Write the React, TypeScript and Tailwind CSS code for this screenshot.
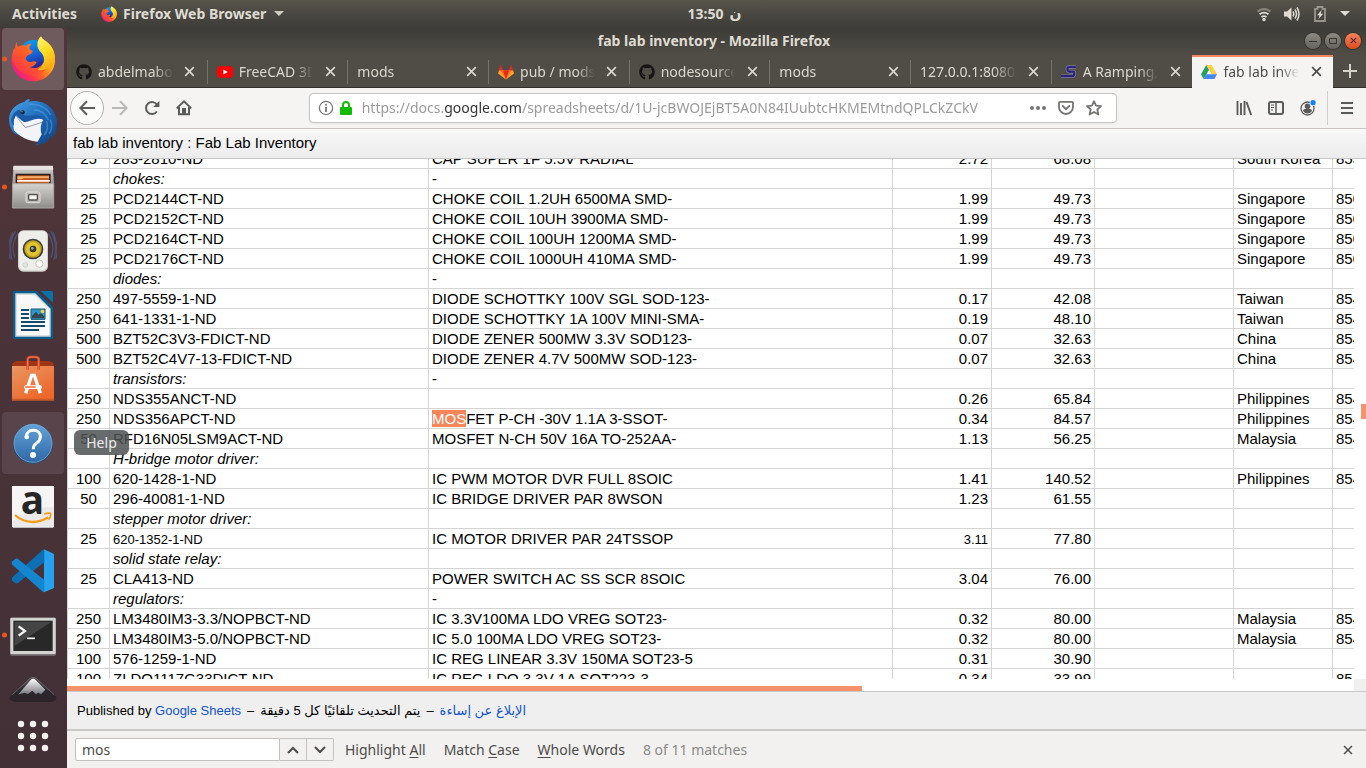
import type { ReactNode } from 'react';
import { FaGithub } from 'react-icons/fa';

type Row = {
  qty?: string;
  part: string;
  desc?: string;
  unit?: string;
  total?: string;
  origin?: string;
  code?: string;
  heading?: boolean;
  small?: boolean;
  match?: string;
};

const rows: Row[] = [
  { qty: '25', part: '283-2810-ND', desc: 'CAP SUPER 1F 5.5V RADIAL', unit: '2.72', total: '68.08', origin: 'South Korea', code: '853224' },
  { part: 'chokes:', desc: '-', heading: true },
  { qty: '25', part: 'PCD2144CT-ND', desc: 'CHOKE COIL 1.2UH 6500MA SMD-', unit: '1.99', total: '49.73', origin: 'Singapore', code: '850450' },
  { qty: '25', part: 'PCD2152CT-ND', desc: 'CHOKE COIL 10UH 3900MA SMD-', unit: '1.99', total: '49.73', origin: 'Singapore', code: '850450' },
  { qty: '25', part: 'PCD2164CT-ND', desc: 'CHOKE COIL 100UH 1200MA SMD-', unit: '1.99', total: '49.73', origin: 'Singapore', code: '850450' },
  { qty: '25', part: 'PCD2176CT-ND', desc: 'CHOKE COIL 1000UH 410MA SMD-', unit: '1.99', total: '49.73', origin: 'Singapore', code: '850450' },
  { part: 'diodes:', desc: '-', heading: true },
  { qty: '250', part: '497-5559-1-ND', desc: 'DIODE SCHOTTKY 100V SGL SOD-123-', unit: '0.17', total: '42.08', origin: 'Taiwan', code: '854110' },
  { qty: '250', part: '641-1331-1-ND', desc: 'DIODE SCHOTTKY 1A 100V MINI-SMA-', unit: '0.19', total: '48.10', origin: 'Taiwan', code: '854110' },
  { qty: '500', part: 'BZT52C3V3-FDICT-ND', desc: 'DIODE ZENER 500MW 3.3V SOD123-', unit: '0.07', total: '32.63', origin: 'China', code: '854110' },
  { qty: '500', part: 'BZT52C4V7-13-FDICT-ND', desc: 'DIODE ZENER 4.7V 500MW SOD-123-', unit: '0.07', total: '32.63', origin: 'China', code: '854110' },
  { part: 'transistors:', desc: '-', heading: true },
  { qty: '250', part: 'NDS355ANCT-ND', unit: '0.26', total: '65.84', origin: 'Philippines', code: '854129' },
  { qty: '250', part: 'NDS356APCT-ND', match: 'MOS', desc: 'FET P-CH -30V 1.1A 3-SSOT-', unit: '0.34', total: '84.57', origin: 'Philippines', code: '854129' },
  { qty: '50', part: 'RFD16N05LSM9ACT-ND', desc: 'MOSFET N-CH 50V 16A TO-252AA-', unit: '1.13', total: '56.25', origin: 'Malaysia', code: '854129' },
  { part: 'H-bridge motor driver:', heading: true },
  { qty: '100', part: '620-1428-1-ND', desc: 'IC PWM MOTOR DVR FULL 8SOIC', unit: '1.41', total: '140.52', origin: 'Philippines', code: '854239' },
  { qty: '50', part: '296-40081-1-ND', desc: 'IC BRIDGE DRIVER PAR 8WSON', unit: '1.23', total: '61.55' },
  { part: 'stepper motor driver:', heading: true },
  { qty: '25', part: '620-1352-1-ND', desc: 'IC MOTOR DRIVER PAR 24TSSOP', unit: '3.11', total: '77.80', small: true },
  { part: 'solid state relay:', heading: true },
  { qty: '25', part: 'CLA413-ND', desc: 'POWER SWITCH AC SS SCR 8SOIC', unit: '3.04', total: '76.00' },
  { part: 'regulators:', desc: '-', heading: true },
  { qty: '250', part: 'LM3480IM3-3.3/NOPBCT-ND', desc: 'IC 3.3V100MA LDO VREG SOT23-', unit: '0.32', total: '80.00', origin: 'Malaysia', code: '854239' },
  { qty: '250', part: 'LM3480IM3-5.0/NOPBCT-ND', desc: 'IC 5.0 100MA LDO VREG SOT23-', unit: '0.32', total: '80.00', origin: 'Malaysia', code: '854239' },
  { qty: '100', part: '576-1259-1-ND', desc: 'IC REG LINEAR 3.3V 150MA SOT23-5', unit: '0.31', total: '30.90' },
  { qty: '100', part: 'ZLDO1117G33DICT-ND', desc: 'IC REG LDO 3.3V 1A SOT223-3', unit: '0.34', total: '33.99', code: '85' },
];

function FirefoxLogo({ className, id }: { className: string; id: string }) {
  return (
    <svg className={className} viewBox="0 0 132 136" aria-hidden="true">
      <defs>
        <linearGradient id={id + 'body'} x1="0.9" y1="0.2" x2="0.15" y2="0.85">
          <stop offset="0" stopColor="#ffe226" />
          <stop offset="0.3" stopColor="#ffa81c" />
          <stop offset="0.55" stopColor="#ff6a22" />
          <stop offset="0.8" stopColor="#ff3350" />
          <stop offset="1" stopColor="#e8208a" />
        </linearGradient>
        <linearGradient id={id + 'globe'} x1="0.3" y1="0" x2="0.6" y2="1">
          <stop offset="0" stopColor="#0a9df0" />
          <stop offset="0.5" stopColor="#1565d8" />
          <stop offset="1" stopColor="#21208c" />
        </linearGradient>
        <linearGradient id={id + 'head'} x1="0.8" y1="0" x2="0" y2="0.9">
          <stop offset="0" stopColor="#ff8c1a" />
          <stop offset="0.5" stopColor="#ff5a2a" />
          <stop offset="1" stopColor="#fb2f55" />
        </linearGradient>
        <linearGradient id={id + 'flame'} x1="0.2" y1="0" x2="0.6" y2="1">
          <stop offset="0" stopColor="#fff36a" />
          <stop offset="0.5" stopColor="#ffdb22" />
          <stop offset="1" stopColor="#ffa514" />
        </linearGradient>
      </defs>
      <path d="M4 52C0 66 0 80 5 93c9 26 33 42 61 42 38 0 66-29 66-64 0-13-3-24-9-34L60 20Z" fill={`url(#${id}body)`} />
      <circle cx="68" cy="54" r="43" fill={`url(#${id}globe)`} />
      <path d="M17 16c0 7 2 11 5 15 7-4 14-5 22-3 6-5 11-6 18-6-5 5-7 9-7 15 3 4 6 5 11 6-2 7-7 10-13 12-5 3-7 6-9 11 1 8 8 12 15 11 8-2 12-5 18 1-3 8-11 13-21 14 16 8 34 0 40-12l16 5c-8 20-26 32-46 32C30 117 4 88 4 56c1-10 4-17 9-23 0-6 1-11 4-17Z" fill={`url(#${id}head)`} />
      <path d="M90 0c-10 9-13 23-9 35 4 11 14 15 17 27 4 18-6 32-19 38 25 6 53-9 53-31 0-20-6-36-20-49C103 13 94 9 90 0Z" fill={`url(#${id}flame)`} />
    </svg>
  );
}

function Thunderbird() {
  return (
    <svg className="size-12" viewBox="0 0 144 144" aria-hidden="true">
      <defs>
        <linearGradient id="tbBlue" x1="0" y1="0" x2="1" y2="1">
          <stop offset="0" stopColor="#4aa8ee" />
          <stop offset="0.5" stopColor="#1c69b8" />
          <stop offset="1" stopColor="#123f7f" />
        </linearGradient>
      </defs>
      <path d="M47 8C53 0 60 0 64 2L58 8c44-9 86 19 86 66 0 16-6 31-16 43l-3-6c-6 12-14 20-26 25l3-8c-6 6-14 10-22 11l8-12-30-8L18 104C4 92-2 72 1 52 5 31 22 15 47 8Z" fill="url(#tbBlue)" />
      <path d="M20 50 40 66l46-12 17 8c-8 12-10 30-5 44l-12 22C58 126 32 114 15 94c-3-14-2-30 5-44Z" fill="#f3f4f7" />
      <path d="M21 50c8 10 17 23 28 36l50-16" fill="none" stroke="#9a9da6" strokeWidth="3" />
      <path d="M7 60c3-15 12-24 24-28l16 18c14 2 30-6 42 0 12 4 16 8 16 12-16-6-30-2-44 4-8 4-14 4-18 2L22 48c-8 8-9 18-7 32-6-6-9-12-8-20Z" fill="#1b5aa6" />
      <path d="M62 16c28-2 52 10 63 32M75 32c22 2 36 14 43 31M112 66c6 12 4 28-6 42M124 62c7 16 5 30-4 42" fill="none" stroke="#61aee9" strokeWidth="5" opacity="0.45" />
      <circle cx="41" cy="40" r="6" fill="#182139" />
      <circle cx="39" cy="38" r="2" fill="#dba447" />
    </svg>
  );
}

function Files() {
  return (
    <svg className="size-12" viewBox="0 0 144 144" aria-hidden="true">
      <defs>
        <linearGradient id="cab" x1="0" y1="0" x2="0" y2="1">
          <stop offset="0" stopColor="#d4d3d0" />
          <stop offset="1" stopColor="#8f8d89" />
        </linearGradient>
      </defs>
      <path d="M14 9h117l5 64H9Z" fill="url(#cab)" />
      <path d="M14 8h117l2 12H12Z" fill="#e7e5e1" />
      <path d="M20 32h105v30H20Z" fill="#29201d" />
      <path d="M25 37h95v25H25Z" fill="#c75a1d" />
      <path d="M25 40h95v5H44l-5 4H25Z" fill="#f4b16f" />
      <path d="M24 51h99v5H24Z" fill="#fffaf0" />
      <path d="M11 62h123v73H11Z" fill="url(#cab)" stroke="#aaa7a2" strokeWidth="3" />
      <rect x="51" y="87" width="42" height="32" rx="5" fill="#bbb9b4" stroke="#e2dfda" strokeWidth="3" />
      <rect x="59" y="95" width="26" height="16" rx="2" fill="#f5f5f1" stroke="#52504e" strokeWidth="4" />
    </svg>
  );
}

function Speaker() {
  return (
    <svg className="size-12" viewBox="0 0 144 144" aria-hidden="true">
      <g fill="none" stroke="#516294" strokeWidth="4" opacity="0.6">
        <path d="M26 20C10 44 10 72 18 92M19 13C0 42 2 77 10 98M12 16C-4 47-3 77 4 96" />
        <path d="M118 20c16 26 16 52 8 72M125 13c19 29 17 64 9 85M132 16c14 31 14 61 8 80" />
      </g>
      <rect x="27" y="10" width="90" height="124" rx="16" fill="#cfcfcc" />
      <rect x="30" y="12" width="84" height="118" rx="14" fill="#ededea" />
      <circle cx="72" cy="66" r="31" fill="#393c3d" />
      <circle cx="72" cy="66" r="26" fill="#c3a41b" />
      <circle cx="72" cy="66" r="21" fill="#e1c52f" />
      <circle cx="72" cy="66" r="10" fill="#343839" />
      <circle cx="70" cy="64" r="4" fill="#a4aaad" />
      <circle cx="91" cy="110" r="11" fill="#fff" stroke="#c5c5c2" strokeWidth="3" />
      <circle cx="49" cy="114" r="7" fill="#e2e2df" stroke="#cacac7" strokeWidth="2" />
    </svg>
  );
}

function Writer() {
  return (
    <svg className="size-12" viewBox="0 0 144 144" aria-hidden="true">
      <path d="M16 0h66l50 48v91a5 5 0 0 1-5 5H17a5 5 0 0 1-5-5V4a4 4 0 0 1 4-4Z" fill="#075e91" />
      <path d="M95 0h32a5 5 0 0 1 5 5v30Z" fill="#0873ab" />
      <path d="M21 9h57l45 45v81H21Z" fill="#f7f8f7" stroke="#d1d5d5" strokeWidth="4" />
      <path d="M36 57h24M36 69h24M36 81h24M36 93h72M36 105h72M36 117h54" stroke="#124b6c" strokeWidth="6" />
      <rect x="66" y="54" width="42" height="31" fill="#2e96ca" />
      <path d="M69 82V75l12-13 8 9 7-5 9 10v6Z" fill="#34474e" />
      <circle cx="101" cy="61" r="6" fill="#f5cf45" />
      <path d="M66 54h42v31H66Z" fill="none" stroke="#12587e" strokeWidth="3" />
    </svg>
  );
}

function Software() {
  return (
    <svg className="size-12" viewBox="0 0 144 144" aria-hidden="true">
      <defs>
        <linearGradient id="bag" x1="0" y1="0" x2="0.6" y2="1">
          <stop offset="0" stopColor="#e99762" />
          <stop offset="1" stopColor="#ee672b" />
        </linearGradient>
      </defs>
      <path d="M10 25 22 18h100l12 7v12H10Z" fill="#9f3417" />
      <path d="M9 33h126v102H9Z" fill="url(#bag)" />
      <path d="M56 44V14q0-8 9-8h15q9 0 9 8v30" fill="none" stroke="#d34b27" strokeWidth="8" />
      <path d="M56 44V14q0-8 9-8h15q9 0 9 8v30" fill="none" stroke="#f07650" strokeWidth="3" />
      <path d="M50 115 68 61h8l18 54" fill="none" stroke="#fff" strokeWidth="10" />
      <rect x="45" y="91" width="54" height="11" rx="5" fill="#fff" />
      <path d="M50 96h28" stroke="#ed6b33" strokeWidth="5" strokeLinecap="round" />
      <path d="M9 131h126v6H9Z" fill="#c75a2b" />
    </svg>
  );
}

function HelpIcon() {
  return (
    <svg className="size-12" viewBox="0 0 144 144" aria-hidden="true">
      <defs>
        <linearGradient id="hlp" x1="0" y1="0" x2="0" y2="1">
          <stop offset="0" stopColor="#62a3d8" />
          <stop offset="1" stopColor="#2f68a7" />
        </linearGradient>
      </defs>
      <circle cx="72" cy="75" r="59" fill="#274d75" />
      <circle cx="72" cy="73" r="57" fill="url(#hlp)" stroke="#7db5df" strokeWidth="2" />
      <path d="M52 54c0-12 8-20 21-20s21 8 21 19c0 9-5 15-12 20-7 5-9 8-9 18" fill="none" stroke="#fff" strokeWidth="9" />
      <circle cx="53" cy="54" r="7" fill="#fff" />
      <circle cx="72" cy="108" r="9" fill="#fff" />
    </svg>
  );
}

function Amazon() {
  return (
    <svg className="size-12" viewBox="0 0 144 144" aria-hidden="true">
      <rect x="9" y="9" width="126" height="125" rx="4" fill="#eaeaea" />
      <path d="M9 9h126v64Q62 67 9 118Z" fill="#f5f5f5" />
      <text x="70" y="94" textAnchor="middle" fontFamily="Open Sans, sans-serif" fontSize="116" fontWeight="700" fill="#252525">a</text>
      <path d="M18 96c29 26 69 27 100 7" fill="none" stroke="#f59b18" strokeWidth="7" />
      <path d="M105 93c8-3 15-3 20-2 1 6-1 13-6 19" fill="none" stroke="#f59b18" strokeWidth="5" />
    </svg>
  );
}

function VsCode() {
  return (
    <svg className="size-12" viewBox="0 0 144 144" aria-hidden="true">
      <path d="M105 7 135 21v102l-30 13Z" fill="#27a2f0" />
      <path d="M10 91 102 8l4-1v38L26 109q-3 2-6 0L10 101q-5-5 0-10Z" fill="#0d70b5" />
      <path d="M10 53q-5-5 0-10l10-8q3-2 6 0l80 64v37l-4-1Z" fill="#1485cf" />
    </svg>
  );
}

function Terminal() {
  return (
    <svg className="size-12" viewBox="0 0 144 144" aria-hidden="true">
      <rect x="3" y="20" width="138" height="114" rx="5" fill="#777" />
      <rect x="4" y="20" width="136" height="109" rx="4" fill="#d3d3d1" />
      <rect x="13" y="29" width="118" height="91" fill="#282828" />
      <path d="M17 33h110L17 104Z" fill="#444" />
      <path d="m29 46 19 14-19 14" fill="none" stroke="#f4f4f2" strokeWidth="7" />
      <path d="M54 82h24" stroke="#f4f4f2" strokeWidth="5" />
    </svg>
  );
}

function Inkscape() {
  return (
    <svg className="size-12" viewBox="0 0 144 144" aria-hidden="true">
      <defs>
        <linearGradient id="ink" x1="0" y1="0" x2="0" y2="1">
          <stop offset="0" stopColor="#5b5c62" />
          <stop offset="0.5" stopColor="#2a282d" />
          <stop offset="1" stopColor="#2b2227" />
        </linearGradient>
        <linearGradient id="inkSnow" x1="0" y1="0" x2="0" y2="1">
          <stop offset="0" stopColor="#fff" />
          <stop offset="1" stopColor="#75757d" />
        </linearGradient>
      </defs>
      <path d="M62 8q10-9 21 0l57 53q7 9-5 14-24 9-63 7-38 2-63-7-12-5-5-14Z" fill="url(#ink)" />
      <path d="M10 56 62 8q10-9 21 0l52 48" fill="none" stroke="#7c7b80" strokeWidth="2" />
      <path d="M65 12q8-8 15 0l29 29-13 14-8-5-8 5-10-11-13 10-11-4-19 6Z" fill="url(#inkSnow)" />
    </svg>
  );
}

const dock: { name: string; icon: ReactNode; running?: boolean; tile?: 'focus' | 'hover' }[] = [
  { name: 'Firefox Web Browser', icon: <FirefoxLogo className="h-[46px] w-11" id="dock" />, running: true, tile: 'focus' },
  { name: 'Thunderbird Mail', icon: <Thunderbird /> },
  { name: 'Files', icon: <Files />, running: true },
  { name: 'Rhythmbox', icon: <Speaker /> },
  { name: 'LibreOffice Writer', icon: <Writer /> },
  { name: 'Ubuntu Software', icon: <Software /> },
  { name: 'Help', icon: <HelpIcon />, tile: 'hover' },
  { name: 'Amazon', icon: <Amazon /> },
  { name: 'Visual Studio Code', icon: <VsCode /> },
  { name: 'Terminal', icon: <Terminal />, running: true },
];

function Dock() {
  return (
    <nav aria-label="Dock" className="relative z-10 flex w-[67px] shrink-0 flex-col items-start gap-0.5 bg-linear-to-b from-[#50363a] to-[#423036] pl-0.5">
      {dock.map((app) => (
        <button
          key={app.name}
          aria-label={app.name}
          className={
            'relative flex h-[62px] w-[62px] shrink-0 items-center justify-center rounded ' +
            (app.tile === 'focus' ? 'bg-[#6f5a5e]' : app.tile === 'hover' ? 'bg-[#58444a]' : '')
          }
        >
          {app.running && <span className="absolute top-1/2 left-0 size-[5px] -translate-y-1/2 rounded-full bg-[#e95420]" />}
          {app.icon}
          {app.tile === 'hover' && (
            <span role="tooltip" className="absolute top-[18px] left-[72px] flex h-[25px] w-[55px] items-center justify-center rounded-md bg-[#4e5152]/85 text-sm text-[#eeeeec]">
              {app.name}
            </span>
          )}
        </button>
      ))}
      <button aria-label="Inkscape" className="flex min-h-0 w-[62px] flex-1 items-start justify-center overflow-hidden pt-2">
        <Inkscape />
      </button>
      <button aria-label="Show Applications" className="flex h-16 w-[62px] shrink-0 items-center justify-center">
        <svg className="size-8" viewBox="0 0 32 32" fill="#f2f1f0" aria-hidden="true">
          {[4, 16, 28].map((y) => [4, 16, 28].map((x) => <circle key={x + '-' + y} cx={x} cy={y} r="3.2" />))}
        </svg>
      </button>
    </nav>
  );
}

function CloseGlyph({ className }: { className: string }) {
  return (
    <svg className={className} viewBox="0 0 12 12" fill="none" stroke="currentColor" strokeWidth="1.8" aria-hidden="true">
      <path d="M1.3 1.3 10.7 10.7M10.7 1.3 1.3 10.7" />
    </svg>
  );
}

const github = <FaGithub className="size-4 shrink-0 text-[#171614]" />;

const youtube = (
  <svg className="size-4 shrink-0" viewBox="0 0 16 16" aria-hidden="true">
    <rect x="0" y="2.2" width="16" height="11.6" rx="3" fill="#f00" />
    <path d="m6.4 5.5 4.3 2.5-4.3 2.5Z" fill="#fff" />
  </svg>
);

const gitlab = (
  <svg className="size-4 shrink-0" viewBox="0 0 16 16" aria-hidden="true">
    <path d="M8 15.4 0 9.4l1-3.2h14l1 3.2Z" fill="#fca326" />
    <path d="m8 15.4-5.5-9.2h11Z" fill="#fc6d26" />
    <path d="M8 15.4 5 6.2h6Z" fill="#e8281c" />
    <path d="M1 6.2 2.9.5l2 5.7Zm14 0L13.1.5l-2 5.7Z" fill="#e8281c" />
  </svg>
);

const ramping = (
  <svg className="size-4 shrink-0" viewBox="0 0 16 16" aria-hidden="true">
    <path d="M14.8 3H8.4Q6.4 3 6.4 5t2 2.6h3.4q1.6.2 1.5 2-.1 2.6-2.4 2.6H0" fill="none" stroke="#8382a6" strokeWidth="3.6" />
    <path d="M14.8 3H8.4Q6.4 3 6.4 5t2 2.6h3.4q1.6.2 1.5 2-.1 2.6-2.4 2.6H0" fill="none" stroke="#292578" strokeWidth="2.2" />
  </svg>
);

const drive = (
  <svg className="size-4 shrink-0" viewBox="0 0 16 16" aria-hidden="true">
    <path d="M5.3 1 0 10.3 2.7 15 8 5.7Z" fill="#1ea362" />
    <path d="M5.3 1h5.4L16 10.3h-5.4Z" fill="#ffcf48" />
    <path d="M5.3 10.3H16L13.3 15H2.7Z" fill="#4587f4" />
  </svg>
);

const tabs: { title: string; icon?: ReactNode; active?: boolean }[] = [
  { title: 'abdelmabou', icon: github },
  { title: 'FreeCAD 3D', icon: youtube },
  { title: 'mods' },
  { title: 'pub / mods ·', icon: gitlab },
  { title: 'nodesource/', icon: github },
  { title: 'mods' },
  { title: '127.0.0.1:8080/' },
  { title: 'A Ramping, L', icon: ramping },
  { title: 'fab lab inven', icon: drive, active: true },
];

function Tabs() {
  return (
    <div role="tablist" className="flex h-[33px] border-b border-[#302f2b] bg-[#504d46]">
      {tabs.map((tab, i) => (
        <div
          key={i}
          className={
            'flex min-w-0 flex-1 items-center ' +
            (tab.active
              ? '-mb-px border-t-2 border-[#f58763] bg-[#f5f4f2] pb-0.5 text-[#4c4c4c]'
              : 'pt-px text-[#dbd8d0]')
          }
        >
          <div role="tab" aria-selected={!!tab.active} className="flex min-w-0 flex-1 items-center gap-1.5 pl-[9px]">
            {tab.icon}
            <span className="min-w-0 flex-1 overflow-hidden mask-r-from-75% text-sm whitespace-nowrap">{tab.title}</span>
          </div>
          <button aria-label={'Close tab ' + tab.title} className="flex w-[34px] shrink-0 justify-center">
            <CloseGlyph className="size-[11px]" />
          </button>
          {i < 7 && <span className="h-6 w-px bg-[#76736b]" />}
        </div>
      ))}
      <button aria-label="New tab" className="flex w-[33px] shrink-0 items-center justify-center text-[#d5d2ca]">
        <svg className="size-[14px]" viewBox="0 0 14 14" stroke="currentColor" strokeWidth="2" aria-hidden="true">
          <path d="M7 0v14M0 7h14" />
        </svg>
      </button>
    </div>
  );
}

function NavBar() {
  return (
    <div className="flex h-[41px] items-center border-b border-[#c9c6c3] bg-[#f5f4f2] pl-[3px] text-[#5b5b5a]">
      <button aria-label="Back" className="flex size-[34px] items-center justify-center rounded-full border border-[#b5b3b1] bg-[#fbfbfa]">
        <svg className="size-4" viewBox="0 0 16 16" fill="none" stroke="currentColor" strokeWidth="2" aria-hidden="true">
          <path d="M16 8H1.5M8 1.3 1.3 8 8 14.7" />
        </svg>
      </button>
      <button aria-label="Forward" className="flex size-8 items-center justify-center text-[#bab9b7]">
        <svg className="size-4" viewBox="0 0 16 16" fill="none" stroke="currentColor" strokeWidth="2" aria-hidden="true">
          <path d="M0 8h14.5M8 1.3 14.7 8 8 14.7" />
        </svg>
      </button>
      <button aria-label="Reload" className="flex size-8 items-center justify-center">
        <svg className="size-4" viewBox="0 0 16 16" fill="none" stroke="currentColor" strokeWidth="2" aria-hidden="true">
          <path d="M12.9 11.5A6 6 0 1 1 13.2 5" />
          <path d="M15.4.8V7H9.2Z" fill="currentColor" stroke="none" />
        </svg>
      </button>
      <button aria-label="Home" className="flex size-8 items-center justify-center">
        <svg className="size-4" viewBox="0 0 16 16" fill="none" stroke="currentColor" strokeWidth="2" aria-hidden="true">
          <path d="M.7 8.4 8 1.4l7.3 7M3 7v7.3h10V7" />
          <path d="M7 14.3V9h2v5.3" />
        </svg>
      </button>
      <div className="flex-[11]" />
      <div className="flex h-[30px] min-w-0 flex-[80] items-center rounded-sm border border-[#c5c2bf] bg-white px-2 shadow-xs">
        <svg className="size-4 shrink-0" viewBox="0 0 16 16" fill="none" stroke="#747473" aria-hidden="true">
          <circle cx="8" cy="8" r="6.6" strokeWidth="1.2" />
          <path d="M8 7v5M8 3.8v1.8" strokeWidth="1.8" />
        </svg>
        <svg className="ml-1 size-4 shrink-0" viewBox="0 0 16 16" aria-hidden="true">
          <path d="M5 8V5a3 3 0 0 1 6 0v3" fill="none" stroke="#12bc00" strokeWidth="2" />
          <rect x="2" y="7" width="12" height="8" rx="1" fill="#12bc00" />
        </svg>
        <div role="textbox" aria-label="Address" className="ml-2 min-w-0 flex-1 overflow-hidden mask-r-from-97% text-sm whitespace-nowrap text-[#9c9b9a]">
          https://docs.<span className="text-[#343434]">google.com</span>/spreadsheets/d/1U-jcBWOJEjBT5A0N84IUubtcHKMEMtndQPLCkZCkV
        </div>
        <div className="ml-8 flex shrink-0 items-center gap-3 pr-1.5 text-[#747473]">
          <button aria-label="Page actions">
            <svg className="size-4" viewBox="0 0 16 16" fill="currentColor" aria-hidden="true">
              <circle cx="2" cy="8" r="2" />
              <circle cx="8" cy="8" r="2" />
              <circle cx="14" cy="8" r="2" />
            </svg>
          </button>
          <button aria-label="Save to Pocket">
            <svg className="size-4" viewBox="0 0 16 16" fill="none" stroke="currentColor" strokeWidth="1.8" aria-hidden="true">
              <path d="M2 1.9h12q1 0 1 1V7A7 7 0 0 1 1 7V2.9q0-1 1-1Z" />
              <path d="M4.7 6 8 9.200 11.300 6" strokeLinecap="round" />
            </svg>
          </button>
          <button aria-label="Bookmark this page">
            <svg className="size-4" viewBox="0 0 16 16" fill="none" stroke="currentColor" strokeWidth="1.8" strokeLinejoin="round" aria-hidden="true">
              <path d="m8 1.200 2 4.500 5 .5-3.700 3.300 1.100 5L8 12l-4.400 2.500 1.100-5L1 6.200l5-.5Z" />
            </svg>
          </button>
        </div>
      </div>
      <div className="flex-[12]" />
      <div className="flex items-center gap-4">
        <button aria-label="Library">
          <svg className="size-4" viewBox="0 0 16 16" stroke="currentColor" strokeWidth="1.9" aria-hidden="true">
            <path d="M1.500 1v14M5 3v12M8.500 1v14M10.500 2l4.700 13" />
          </svg>
        </button>
        <button aria-label="Sidebars">
          <svg className="size-4" viewBox="0 0 16 16" fill="none" stroke="currentColor" aria-hidden="true">
            <rect x="1" y="2" width="14" height="12" rx="2" strokeWidth="2" />
            <path d="M8 2v12" strokeWidth="1.5" />
            <path d="M3 5h3M3 7.500h3M3 10h2" strokeWidth="1.2" />
          </svg>
        </button>
        <button aria-label="Account">
          <svg className="size-4" viewBox="0 0 16 16" aria-hidden="true">
            <circle cx="7.5" cy="8.5" r="6.5" fill="none" stroke="currentColor" strokeWidth="1.3" />
            <circle cx="7.5" cy="6.3" r="2.8" fill="currentColor" />
            <path d="M3 11q0-2 2-2h5q2 0 2 2-1.800 2.600-4.500 2.600T3 11Z" fill="currentColor" />
            <circle cx="13" cy="2.7" r="3.4" fill="#f5f4f2" />
            <circle cx="13" cy="2.7" r="2.6" fill="#0a84ff" />
          </svg>
        </button>
      </div>
      <div className="ml-[11px] h-[34px] w-px bg-[#d2d0ce]" />
      <button aria-label="Open menu" className="flex w-[38px] justify-center">
        <svg className="h-3 w-3" viewBox="0 0 12 12" stroke="currentColor" strokeWidth="2" aria-hidden="true">
          <path d="M0 1h12M0 6h12M0 11h12" />
        </svg>
      </button>
    </div>
  );
}

const cell = 'h-5 overflow-hidden border-r border-b border-[#d4d4d4] px-[3px] py-0 leading-[19px] whitespace-nowrap ';

function Sheet() {
  return (
    <div className="flex min-h-0 flex-1 bg-white">
      <div className="min-w-0 flex-1 overflow-hidden border-l border-[#d4d4d4]">
        <table className="-mt-[10px] w-full table-fixed border-separate border-spacing-0 font-['Liberation_Sans',sans-serif] text-[15px] text-black">
          <colgroup>
            <col className="w-[42px]" />
            <col className="w-[319px]" />
            <col />
            <col className="w-[99px]" />
            <col className="w-[103px]" />
            <col className="w-[139px]" />
            <col className="w-[99px]" />
            <col className="w-[21px]" />
          </colgroup>
          <tbody>
            {rows.map((row) => (
              <tr key={row.part}>
                <td className={cell + 'text-center'}>{row.qty}</td>
                <td className={cell + (row.heading ? 'italic' : '')}>
                  {row.small ? <span className="text-[13px] leading-none">{row.part}</span> : row.part}
                </td>
                <td className={cell}>
                  {row.match && <mark className="bg-[#f5865c] text-white">{row.match}</mark>}
                  {row.desc}
                </td>
                <td className={cell + 'text-right'}>
                  {row.small ? <span className="text-[13px] leading-none">{row.unit}</span> : row.unit}
                </td>
                <td className={cell + 'text-right'}>{row.total}</td>
                <td className={cell} />
                <td className={cell}>{row.origin}</td>
                <td className="h-5 overflow-hidden border-b border-[#d4d4d4] py-0 pl-[3px] leading-[19px] whitespace-nowrap">{row.code}</td>
              </tr>
            ))}
          </tbody>
        </table>
      </div>
      <div className="flex w-3 flex-col items-end">
        <div className="flex-[47]" />
        <div className="h-[15px] w-[5px] bg-[#f5916b]" />
        <div className="flex-[50]" />
      </div>
    </div>
  );
}

function WindowButtons() {
  return (
    <div className="flex flex-1 justify-end gap-1 pr-[5px]">
      <button aria-label="Minimize" className="flex size-4 items-center justify-center rounded-full bg-linear-to-b from-[#8c8a83] to-[#65635d] shadow-[0_0_0_1px_#35342f]">
        <svg className="size-2" viewBox="0 0 8 8" stroke="#35342f" aria-hidden="true">
          <path d="M0 4.500h8" />
        </svg>
      </button>
      <button aria-label="Maximize" className="flex size-4 items-center justify-center rounded-full bg-linear-to-b from-[#8c8a83] to-[#65635d] shadow-[0_0_0_1px_#35342f]">
        <svg className="size-2" viewBox="0 0 8 8" fill="none" stroke="#35342f" aria-hidden="true">
          <path d="M.5 1.500h7v5h-7Z" />
        </svg>
      </button>
      <button aria-label="Close" className="flex size-4 items-center justify-center rounded-full bg-linear-to-b from-[#f5825a] to-[#df4a1c] text-[#48220f] shadow-[0_0_0_1px_#35342f]">
        <CloseGlyph className="size-[7px]" />
      </button>
    </div>
  );
}

function TopBar() {
  return (
    <header className="flex h-7 shrink-0 items-center bg-linear-to-b from-[#57544c] to-[#3d3c38] pr-4 pb-px pl-3 text-sm font-bold text-[#dfdbd2]">
      <div className="flex flex-1 items-center">
        <button>Activities</button>
        <button className="ml-6 flex items-center">
          <FirefoxLogo className="mr-1.5 size-4" id="bar" />
          Firefox Web Browser
          <span className="ml-2 border-x-5 border-t-5 border-x-transparent border-t-[#cfccc4]" />
        </button>
      </div>
      <button className="ml-[67px] flex items-center gap-1.5">
        <span>13:50</span>
        <span className="font-['DejaVu_Sans',sans-serif]">ن</span>
      </button>
      <div className="flex flex-1 items-center justify-end gap-3 text-[#dfdbd2]">
        <svg className="size-4" viewBox="0 0 16 16" fill="none" stroke="currentColor" strokeWidth="1.8" aria-hidden="true">
          <path d="M1.500 5.500q6.500-5 13 0" opacity="0.45" />
          <path d="M3.500 8.300q4.500-3.300 9 0M5.500 11q2.500-1.700 5 0" />
          <circle cx="8" cy="13.5" r="1.7" fill="currentColor" stroke="none" />
        </svg>
        <svg className="size-4" viewBox="0 0 16 16" fill="none" stroke="currentColor" strokeWidth="1.5" aria-hidden="true">
          <path d="M0 5.500h3L7.500 1.500v13L3 10.500H0Z" fill="currentColor" stroke="none" />
          <path d="M9 5.500q1.500 2.500 0 5M11 3.500q3 4.500 0 9M13 1.500q4 6.500 0 13" />
        </svg>
        <svg className="size-4" viewBox="0 0 16 16" fill="none" aria-hidden="true">
          <path d="M3 2.800h2.500V1h5v1.800H13V15H3Z" stroke="#98958d" strokeWidth="1.8" />
          <path d="M9.700 4 5 9.300h2.500l-1 3.700L11.200 7.700H8.700Z" fill="currentColor" />
        </svg>
        <span className="border-x-5 border-t-5 border-x-transparent border-t-[#dfdbd2]" />
      </div>
    </header>
  );
}

function FindBar() {
  return (
    <div className="flex h-[39px] shrink-0 items-center border-t-2 border-[#c9c6c3] bg-[#f2f1ef] pr-3 pl-2 text-sm text-[#4c4c4c]">
      <input aria-label="Find in page" defaultValue="mos" className="h-[23px] w-[205px] rounded-l-xs border border-[#c4c1be] bg-white px-1.5 outline-none" />
      <button aria-label="Previous match" className="flex h-[23px] w-[27px] items-center justify-center border-y border-r border-[#c4c1be]">
        <svg className="h-2 w-3" viewBox="0 0 12 8" fill="none" stroke="currentColor" strokeWidth="2" aria-hidden="true">
          <path d="m1 7 5-5 5 5" />
        </svg>
      </button>
      <button aria-label="Next match" className="flex h-[23px] w-[27px] items-center justify-center rounded-r-xs border-y border-r border-[#c4c1be]">
        <svg className="h-2 w-3" viewBox="0 0 12 8" fill="none" stroke="currentColor" strokeWidth="2" aria-hidden="true">
          <path d="m1 1 5 5 5-5" />
        </svg>
      </button>
      <div className="ml-[11px] flex gap-[18px]">
        <button>Highlight <u className="underline-offset-2">A</u>ll</button>
        <button>Match <u className="underline-offset-2">C</u>ase</button>
        <button><u className="underline-offset-2">W</u>hole Words</button>
        <span className="text-[#8b8a88]">8 of 11 matches</span>
      </div>
      <button aria-label="Close find bar" className="ml-auto flex w-3 justify-center">
        <CloseGlyph className="size-[10px]" />
      </button>
    </div>
  );
}

export default function App() {
  return (
    <div className="flex h-screen flex-col overflow-hidden font-['Noto_Sans',sans-serif]">
      <TopBar />
      <div className="flex min-h-0 flex-1">
        <Dock />
        <main className="flex min-w-0 flex-1 flex-col">
          <div className="flex h-[27px] shrink-0 items-center bg-linear-to-b from-[#3c3b37] to-[#504d46] pb-0.5">
            <div className="flex-1" />
            <h1 className="text-sm font-bold text-[#dfdbd2]">fab lab inventory - Mozilla Firefox</h1>
            <WindowButtons />
          </div>
          <Tabs />
          <NavBar />
          <div className="flex h-[30px] shrink-0 items-center border-b border-[#c8c8c8] bg-linear-to-b from-[#f8f8f8] to-[#ececec] px-1.5 font-['Liberation_Sans',sans-serif] text-[15px] text-black">
            fab lab inventory : Fab Lab Inventory
          </div>
          <Sheet />
          <div className="flex h-3 shrink-0 bg-white">
            <div className="flex flex-1 items-end">
              <div className="h-[5px] w-21/34 bg-[#f5916b]" />
            </div>
            <div className="w-3 bg-[#f1f0ee]" />
          </div>
          <footer className="flex h-[38px] shrink-0 items-center gap-1.5 border-t border-[#c8c8c8] bg-[#efefef] pl-2.5 font-['Liberation_Sans','DejaVu_Sans',sans-serif] text-[13px] text-black">
            <span>
              Published by <a href="#sheets" className="text-[#1155cc]">Google Sheets</a>
            </span>
            <span>–</span>
            <span dir="rtl">يتم التحديث تلقائيًا كل 5 دقيقة</span>
            <span>–</span>
            <a href="#report" dir="rtl" className="text-[#1155cc]">الإبلاغ عن إساءة</a>
          </footer>
          <FindBar />
        </main>
      </div>
    </div>
  );
}
